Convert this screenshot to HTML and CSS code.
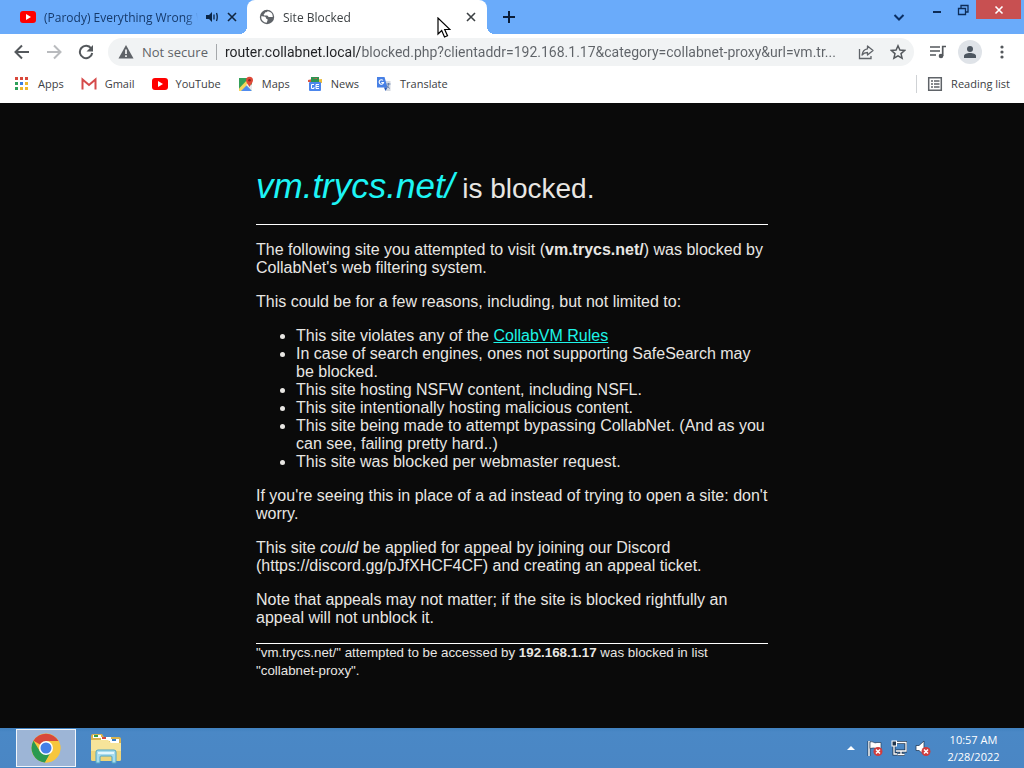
FILE: index.html
```
<!DOCTYPE html>
<html lang="en">
<head>
    <meta charset="UTF-8">
    <meta name="viewport" content="width=device-width, initial-scale=1.0">
    <title>Site Blocked</title>
    <link rel="stylesheet" href="styles.css">
</head>
<body>
    <header class="browser">
        <div class="tab-strip">
            <div class="tab">
                <svg class="icon" viewBox="0 0 16 16"><rect y="2" width="16" height="12" rx="3" fill="#f00"/><path d="M6 5v6l5-3z" fill="#fff"/></svg>
                <span class="tab-title">(Parody) Everything Wrong With</span>
                <button class="tab-button" aria-label="Mute tab"><svg viewBox="0 0 12 12"><path d="M0 4h3l3-3v10L3 8H0z" fill="#0b2545"/><path d="M8 3.500v5M10.500 2q1.500 4 0 8" fill="none" stroke="#0b2545" stroke-width="1.300"/></svg></button>
                <button class="tab-button" aria-label="Close tab"><svg viewBox="0 0 12 12"><path d="M2 2l8 8M10 2l-8 8" stroke="#12263f" stroke-width="1.600"/></svg></button>
            </div>
            <div class="tab active">
                <svg class="icon" viewBox="0 0 16 16"><circle cx="8" cy="8" r="7.200" fill="#5f6368"/><path d="M9 2.200c-1 .3-1.200 1-2.500 1.100-.7.200-.4 1.300-1.300 1.500-.8.300-.4 1.100.1 1.600H8c1.200 0 .8 1.500 2 1.500h3.800A5.800 5.800 0 0 0 9 2.200zM2.200 7.300c1.300.2 3 .1 4 .5 1.200.5.300 1.800 1.600 2.100 1 .2 1 .8.700 1.600l-.8 2.300A5.800 5.800 0 0 1 2.200 7.300z" fill="#fff"/></svg>
                <span class="tab-title">Site Blocked</span>
                <button class="tab-button" aria-label="Close tab"><svg viewBox="0 0 12 12"><path d="M2 2l8 8M10 2l-8 8" stroke="#3c4043" stroke-width="1.600"/></svg></button>
            </div>
            <button class="new-tab" aria-label="New tab"><svg viewBox="0 0 12 12"><path d="M6 0v12M0 6h12" stroke="#0b1d38" stroke-width="2"/></svg></button>
            <button class="tab-search" aria-label="Search tabs"><svg viewBox="0 0 12 12"><path d="M1.500 4L6 8.500 10.500 4" fill="none" stroke="#0b2f63" stroke-width="2"/></svg></button>
            <div class="window-buttons">
                <button aria-label="Minimize"><svg viewBox="0 0 12 12"><path d="M2 8h8" stroke="#0d2c57" stroke-width="2"/></svg></button>
                <button aria-label="Restore"><svg viewBox="0 0 12 12"><path d="M1.500 4.500h7v6h-7zM4 4V1.500h7v6.500H9" fill="none" stroke="#0d2c57" stroke-width="1.300"/></svg></button>
                <button class="close" aria-label="Close"><svg viewBox="0 0 12 12"><path d="M2.500 2.500l7 7M9.500 2.500l-7 7" stroke="#fff" stroke-width="1.600"/></svg></button>
            </div>
        </div>

        <div class="toolbar">
            <button class="nav-button" aria-label="Back"><svg viewBox="0 0 16 16"><path d="M15 8H2M8 1.500L1.500 8 8 14.500" fill="none" stroke="#54585c" stroke-width="2"/></svg></button>
            <button class="nav-button" aria-label="Forward"><svg viewBox="0 0 16 16"><path d="M1 8h13M8 1.500L14.500 8 8 14.500" fill="none" stroke="#b9bbbe" stroke-width="2"/></svg></button>
            <button class="nav-button" aria-label="Reload"><svg viewBox="0 0 16 16"><path d="M13.200 4.500A6.200 6.200 0 1 0 14.200 9" fill="none" stroke="#54585c" stroke-width="2"/><path d="M15 1v6.500H8.500z" fill="#54585c"/></svg></button>
            <div class="omnibox">
                <svg class="icon" viewBox="0 0 16 16"><path d="M8 1l7.500 13.500H.5z" fill="#5f6368"/><path d="M8 5.500v4.500M8 11.200v1.800" stroke="#fff" stroke-width="1.600"/></svg>
                <label class="security" for="address">Not secure</label>
                <input class="address" id="address" type="text" value="router.collabnet.local/blocked.php?clientaddr=192.168.1.17&amp;category=collabnet-proxy&amp;url=vm.tr...">
                <button class="omni-button" aria-label="Share"><svg viewBox="0 0 16 16"><path d="M1.500 5v9.500H13V12" fill="none" stroke="#5f6368" stroke-width="1.300"/><path d="M9.500 2l5.500 4.500-5.500 4.500V8.500c-2.500 0-4 .7-5.500 2.500.5-3.500 2.500-5.700 5.500-6.200z" fill="none" stroke="#5f6368" stroke-width="1.300" stroke-linejoin="round"/></svg></button>
                <button class="omni-button" aria-label="Bookmark this tab"><svg viewBox="0 0 16 16"><path d="M8 1.800l1.900 4.300 4.700.4-3.600 3.100 1.100 4.600L8 11.800l-4.100 2.400L5 9.600 1.400 6.500l4.700-.4z" fill="none" stroke="#54585c" stroke-width="1.500"/></svg></button>
            </div>
            <button class="nav-button" aria-label="Media controls"><svg viewBox="0 0 16 16"><path d="M0 3h10M0 7h10M0 11h6" stroke="#54585c" stroke-width="1.700"/><path d="M12.700 12V2.500H16" fill="none" stroke="#54585c" stroke-width="1.700"/><circle cx="11" cy="12" r="2.300" fill="#54585c"/></svg></button>
            <button class="nav-button avatar" aria-label="Profile"><svg viewBox="0 0 16 16"><circle cx="8" cy="5" r="3" fill="#4d5660"/><path d="M2 14v-2c0-2 3-3 6-3s6 1 6 3v2z" fill="#4d5660"/></svg></button>
            <button class="nav-button" aria-label="Menu"><svg viewBox="0 0 16 16"><g fill="#54585c"><circle cx="8" cy="3" r="1.600"/><circle cx="8" cy="8" r="1.600"/><circle cx="8" cy="13" r="1.600"/></g></svg></button>
        </div>

        <nav class="bookmarks">
            <a href="#"><svg class="icon" viewBox="0 0 16 16"><path d="M1 1h3v3H1zM6 1h3v3H6zM11 1h3v3h-3z" fill="#d9483b"/><path d="M1 6h3v3H1z" fill="#2da05a"/><path d="M6 6h3v3H6z" fill="#3b7de0"/><path d="M11 6h3v3h-3z" fill="#eeb62c"/><path d="M1 11h3v3H1z" fill="#2da05a"/><path d="M6 11h3v3H6zM11 11h3v3h-3z" fill="#eeb62c"/></svg>Apps</a>
            <a href="#"><svg class="icon" viewBox="0 0 16 16"><path d="M1.500 13.500V3.500L8 9l6.500-5.500v10" fill="none" stroke="#d54b4b" stroke-width="2"/></svg>Gmail</a>
            <a href="#"><svg class="icon" viewBox="0 0 16 16"><rect y="2" width="16" height="12" rx="3" fill="#f00"/><path d="M6 5v6l5-3z" fill="#fff"/></svg>YouTube</a>
            <a href="#"><svg class="icon" viewBox="0 0 16 16"><rect x="1" y="2" width="13" height="13" rx="1.500" fill="#34a05a"/><path d="M2 15l6-6 6 6z" fill="#4f8bf0"/><path d="M1 12.500L11 2h3v2L3 15H1z" fill="#f5d65b"/><path d="M8 9l6 6V9L11 6z" fill="#e8eaed"/><path d="M1 2h8L1 10.500z" fill="#34a05a"/><path d="M11.500 11C10 8 8 6.500 8 4.200a3.500 3.500 0 0 1 7 0c0 2.300-2 3.800-3.500 6.800z" fill="#df4938"/><circle cx="11.500" cy="4.200" r="1.300" fill="#8e261c"/></svg>Maps</a>
            <a href="#"><svg class="icon" viewBox="0 0 16 16"><path d="M4 1h8v5H4z" fill="#2c9551"/><path d="M1 4l9-2 1 4H1z" fill="#db5745"/><path d="M6 4l9-1v4H6z" fill="#e9bc3f"/><path d="M4 3h8v3H4z" fill="#2c9551"/><rect x="2" y="6" width="12" height="9" rx="1" fill="#4c86ec"/><path d="M7 8.500H4.500v4H7V11M12 8.500H9v4h3M9 10.500h3" fill="none" stroke="#fff"/></svg>News</a>
            <a href="#"><svg class="icon" viewBox="0 0 16 16"><path d="M6 5h8.500v10H10z" fill="#d5dae2"/><path d="M1 1h7.500l3 10.500H1z" fill="#4780e5"/><path d="M8 11.500h3.500L9.500 15z" fill="#2859b8"/><path d="M7 4.500a2.200 2.200 0 1 0 .5 2H5.300" fill="none" stroke="#fff" stroke-width="1.100"/><path d="M10.500 8h4M12.500 7v1c0 2-1 3-2 4M11 9.500l2.500 3" fill="none" stroke="#6580ae"/></svg>Translate</a>
            <a class="reading-list" href="#"><svg class="icon" viewBox="0 0 16 16"><path d="M1.700 1.700h12.600v12.600H1.700z" fill="none" stroke="#5f6368" stroke-width="1.500"/><path d="M4 5h2M4 8h2M4 11h2M7 5h5.500M7 8h5.500M7 11h5.500" stroke="#5f6368" stroke-width="1.500"/></svg>Reading list</a>
        </nav>
    </header>

    <main class="page">
        <div class="container">
            <h1><em>vm.trycs.net/</em> is blocked.</h1>
            <hr>
            <p>The following site you attempted to visit (<b>vm.trycs.net/</b>) was blocked by CollabNet's web filtering system.</p>
            <p>This could be for a few reasons, including, but not limited to:</p>
            <ul>
                <li>This site violates any of the <a href="#">CollabVM Rules</a></li>
                <li>In case of search engines, ones not supporting SafeSearch may be blocked.</li>
                <li>This site hosting NSFW content, including NSFL.</li>
                <li>This site intentionally hosting malicious content.</li>
                <li>This site being made to attempt bypassing CollabNet. (And as you can see, failing pretty hard..)</li>
                <li>This site was blocked per webmaster request.</li>
            </ul>
            <p>If you're seeing this in place of a ad instead of trying to open a site: don't worry.</p>
            <p>This site <i>could</i> be applied for appeal by joining our Discord (https://discord.gg/pJfXHCF4CF) and creating an appeal ticket.</p>
            <p>Note that appeals may not matter; if the site is blocked rightfully an appeal will not unblock it.</p>
            <hr>
            <small>"vm.trycs.net/" attempted to be accessed by <b>192.168.1.17</b> was blocked in list "collabnet-proxy".</small>
        </div>
    </main>

    <footer class="taskbar">
        <button class="task active" aria-label="Google Chrome">
            <svg viewBox="0 0 32 32"><circle cx="16" cy="16" r="14.500" fill="#f6c63d"/><path d="M16 16L3.500 8.700A14.500 14.500 0 0 1 28.500 9H16z" fill="#d8483a"/><path d="M3.500 8.700A14.500 14.500 0 0 0 15 30.500l6-11L16 16 10 19.500z" fill="#2a9a51"/><path d="M28.500 9H16v7l6 3.500-7 11A14.500 14.500 0 0 0 28.500 9z" fill="#f6c63d"/><circle cx="16" cy="16" r="7" fill="#fff"/><circle cx="16" cy="16" r="5.500" fill="#4580e8"/></svg>
        </button>
        <button class="task" aria-label="File Explorer">
            <svg viewBox="0 0 32 32"><path d="M1 4q0-2 2-2h9l2 3h15q2 0 2 2v20H1z" fill="#d9b44f"/><path d="M3 3h8v3H3z" fill="#fff"/><path d="M4 3h4v2H4z" fill="#37a04b"/><path d="M11 5h10v4H11z" fill="#fff"/><path d="M12 5h4v2h-4z" fill="#d84a3d"/><path d="M20 7h9v4h-9z" fill="#fff"/><path d="M22 7h4v2h-4z" fill="#377ec8"/><path d="M1 8h17l3 3h10v16q0 2-2 2H3q-2 0-2-2z" fill="#f6e49a"/><path d="M1 19h30v8q0 2-2 2H3q-2 0-2-2z" fill="#efd579"/><path d="M6 31V20q0-2 2-2h16q2 0 2 2v11h-4v-6q0-1-1-1H11q-1 0-1 1v6z" fill="#a9dced" stroke="#4fa5c5"/><path d="M8 21h16" stroke="#e3f7fd" stroke-width="2"/></svg>
        </button>
        <div class="tray">
            <button aria-label="Show hidden icons"><svg viewBox="0 0 16 16"><path d="M4 10l4-4 4 4z" fill="#fff"/></svg></button>
            <button aria-label="Action Center"><svg viewBox="0 0 16 16"><path d="M2 1v15" stroke="#233c5a" stroke-width="3"/><path d="M2 1v15" stroke="#fff" stroke-width="1.500"/><path d="M3 2c3-1.500 4 2 7 .5h4v6c-4 1-6-1.500-11 0z" fill="#fff" stroke="#233c5a" stroke-width=".7"/><circle cx="11" cy="11.500" r="4.500" fill="#d13c3c"/><path d="M9 9.500l4 4M13 9.500l-4 4" stroke="#fff" stroke-width="1.500"/></svg></button>
            <button aria-label="Network"><svg viewBox="0 0 16 16"><path d="M5 2.500h10v8.500H5M10 11v3M6.500 14.500h7M3 6v8h3" fill="none" stroke="#20364e" stroke-width="3"/><path d="M5 2.500h10v8.500H5M10 11v3M6.500 14.500h7M3 6v8h3" fill="none" stroke="#fff" stroke-width="1.300"/><rect x="1" y="1" width="4.500" height="5" fill="#20364e" stroke="#fff"/></svg></button>
            <button aria-label="Volume muted"><svg viewBox="0 0 16 16"><path d="M1 5.500h3l5-4.500v14l-5-4.500H1z" fill="#fff" stroke="#233c5a" stroke-width=".8"/><circle cx="11" cy="11.500" r="4.500" fill="#d13c3c"/><path d="M9 9.500l4 4M13 9.500l-4 4" stroke="#fff" stroke-width="1.500"/></svg></button>
            <div class="clock"><span>10:57 AM</span><span>2/28/2022</span></div>
        </div>
    </footer>

    <svg class="cursor" viewBox="0 0 14 22"><path d="M1 1v16l3.700-3.500L7.500 20l3-1.300-2.800-6.200H13z" fill="#fff" stroke="#000" stroke-width="1.200"/></svg>
</body>
</html>
```
FILE: styles.css
```
* {
    box-sizing: border-box;
}
body {
    display: flex;
    flex-direction: column;
    min-height: 100vh;
    margin: 0;
    background-color: #0a0a0a;
    font-family: "Liberation Sans", Arial, sans-serif;
}
button {
    display: flex;
    align-items: center;
    justify-content: center;
    flex: none;
    margin: 0;
    padding: 0;
    border: 0;
    background: none;
}
svg {
    display: block;
    flex: none;
}
.icon {
    width: 16px;
    height: 16px;
}

/* browser window */
.browser {
    background-color: #fff;
    color: #3c4043;
    font-family: "Open Sans", "Noto Sans", sans-serif;
    font-size: 12px;
}
.tab-strip {
    display: flex;
    height: 34px;
    background-color: #6aabfa;
}
.tab {
    display: flex;
    align-items: center;
    gap: 8px;
    width: 247px;
    padding: 0 9px 0 20px;
    color: #163a6b;
}
.tab-title {
    flex: 1;
    overflow: hidden;
    white-space: nowrap;
    -webkit-mask-image: linear-gradient(to left, transparent, #000 12px);
    mask-image: linear-gradient(to left, transparent, #000 12px);
}
.tab-button svg,
.tab-search svg,
.window-buttons svg {
    width: 12px;
    height: 12px;
}
.tab-button {
    width: 12px;
    height: 16px;
}
.tab.active {
    position: relative;
    width: 240px;
    padding: 0 10px 0 12px;
    border-radius: 8px 8px 0 0;
    background-color: #fff;
    color: #3c4043;
}
.tab.active::before,
.tab.active::after {
    content: "";
    position: absolute;
    bottom: 0;
    width: 8px;
    height: 8px;
}
.tab.active::before {
    right: 100%;
    background: radial-gradient(circle at 0 0, transparent 8px, #fff 8px);
}
.tab.active::after {
    left: 100%;
    background: radial-gradient(circle at 100% 0, transparent 8px, #fff 8px);
}
.new-tab {
    width: 44px;
}
.new-tab svg {
    width: 12px;
    height: 12px;
}
.tab-search {
    width: 26px;
    margin-left: auto;
}
.window-buttons {
    display: flex;
    height: 19px;
    padding-right: 3px;
}
.window-buttons button {
    width: 26px;
}
.window-buttons button:first-child {
    margin-left: 12px;
}
.window-buttons .close {
    width: 45px;
    background-color: #c85051;
}

.toolbar {
    display: flex;
    align-items: center;
    gap: 8px;
    height: 36px;
    padding: 0 10px;
}
.nav-button {
    width: 24px;
    height: 24px;
}
.nav-button svg {
    width: 16px;
    height: 16px;
}
.omnibox {
    display: flex;
    flex: 1;
    align-items: center;
    gap: 8px;
    min-width: 0;
    height: 28px;
    margin: 0 4px 0 2px;
    padding: 0 4px 0 10px;
    border-radius: 14px;
    background-color: #f1f3f4;
}
.security {
    padding-right: 8px;
    border-right: 1px solid #a5a8ab;
    color: #5f6368;
    font-size: 13px;
    line-height: 16px;
    white-space: nowrap;
}
/* host part is darker than the path */
.address {
    flex: 1;
    min-width: 0;
    padding: 0;
    border: 0;
    outline: 0;
    background: linear-gradient(to right, #202124 136px, #5f6368 136px);
    -webkit-background-clip: text;
    background-clip: text;
    -webkit-text-fill-color: transparent;
    font: 14px Roboto, "Open Sans", sans-serif;
}
.omni-button {
    width: 24px;
    height: 24px;
}
.omni-button svg {
    width: 16px;
    height: 16px;
}
.avatar {
    border-radius: 50%;
    background-color: #dfe3e8;
}

.bookmarks {
    display: flex;
    align-items: center;
    gap: 17px;
    height: 33px;
    padding: 0 14px 6px;
    font-size: 11px;
}
.bookmarks a {
    display: flex;
    align-items: center;
    gap: 8px;
    color: inherit;
    line-height: 18px;
    text-decoration: none;
    white-space: nowrap;
}
.bookmarks .reading-list {
    margin-left: auto;
    padding-left: 10px;
    border-left: 1px solid #cfd2d5;
}

/* blocked page */
.page {
    flex: 1;
    padding: 65px 0 40px;
    color: #e8e6e3;
    font-size: 16px;
    line-height: 18px;
}
.container {
    width: 50%;
    margin: 0 auto;
}
h1 {
    margin: 0 0 16px;
    font-size: 28px;
    font-weight: normal;
    line-height: 38px;
}
h1 em {
    color: #1df5f5;
    font-size: 35px;
    line-height: 1;
}
hr {
    height: 1px;
    margin: 0;
    border: 0;
    background-color: #fff;
}
p,
ul {
    margin: 16px 0;
}
ul {
    padding-left: 40px;
}
.container a {
    color: #1df5e8;
}
small {
    display: block;
    font-size: smaller;
}

/* taskbar */
.taskbar {
    display: flex;
    height: 40px;
    padding: 1px 16px;
    background: linear-gradient(#4182c0, #4a88c6 4px, #4a86c4);
    color: #fff;
    font-family: "Open Sans", "Noto Sans", sans-serif;
    font-size: 11px;
}
.task {
    width: 60px;
}
.task svg {
    width: 32px;
    height: 32px;
}
.task.active {
    border: 1px solid #f2f6fb;
    background-color: #9db5d6;
}
.tray {
    display: flex;
    align-items: center;
    gap: 8px;
    margin-left: auto;
}
.tray svg {
    width: 16px;
    height: 16px;
}
.clock {
    display: flex;
    flex-direction: column;
    align-items: center;
    width: 69px;
    line-height: 17px;
}

.cursor {
    position: absolute;
    top: 17px;
    left: 437px;
    width: 14px;
    height: 22px;
}
```
